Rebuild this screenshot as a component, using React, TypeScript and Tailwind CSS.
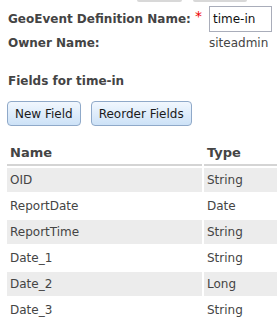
import React from "react";

const rows = [
  ["OID", "String"],
  ["ReportDate", "Date"],
  ["ReportTime", "String"],
  ["Date_1", "String"],
  ["Date_2", "Long"],
  ["Date_3", "String"],
];

export default function App() {
  return (
    <div
      className="w-[277px] h-[326px] overflow-hidden bg-white text-[#444] text-[12px]"
      style={{ fontFamily: '"DejaVu Sans", Verdana, sans-serif' }}
    >
      <div className="flex h-[2px]">
        <div className="ml-[137px] w-[45px] h-[2px] rounded-b bg-[#d8d8d8]" />
        <div className="ml-[11px] w-[54px] h-[2px] rounded-b bg-[#d8d8d8]" />
      </div>
      <div className="flex items-center mt-[4px] h-[26px]">
        <div className="pl-[8px] w-[195px] font-bold whitespace-nowrap">GeoEvent Definition Name:</div>
        <div className="w-[14px] text-[#e00] text-[14px] leading-none -mt-[6px]">*</div>
        <div className="w-[63px] h-[26px] border border-[#a9adba] flex items-center pl-[3px] text-[#111]">
          time-in
        </div>
      </div>
      <div className="flex items-center h-[20px] mt-[1px]">
        <div className="pl-[8px] w-[209px] font-bold">Owner Name:</div>
        <div>siteadmin</div>
      </div>
      <div className="pl-[8px] mt-[18px] h-[20px] flex items-center font-bold">Fields for time-in</div>
      <div className="flex gap-[10px] pl-[7px] mt-[10px]">
        <button className="h-[25px] px-[7px] rounded-[4px] border border-[#8fa9c9] bg-gradient-to-b from-[#f1f7fe] to-[#cde2f7] text-[#1a1a1a]">
          New Field
        </button>
        <button className="h-[25px] px-[7px] rounded-[4px] border border-[#8fa9c9] bg-gradient-to-b from-[#f1f7fe] to-[#cde2f7] text-[#1a1a1a]">
          Reorder Fields
        </button>
      </div>
      <table className="mt-[14px] ml-[5px] border-separate border-spacing-[2px] w-[300px] table-fixed">
        <thead>
          <tr>
            <th className="w-[195px] h-[24px] text-left font-bold pl-[3px] border-b-2 border-[#d4d4d4] text-[13px]">Name</th>
            <th className="text-left font-bold pl-[3px] border-b-2 border-[#d4d4d4] text-[13px]">Type</th>
          </tr>
        </thead>
        <tbody>
          {rows.map(([n, t], i) => (
            <tr key={n} className={i % 2 === 0 ? "bg-[#ececec]" : ""}>
              <td className="h-[24px] pl-[3px]">{n}</td>
              <td className="h-[24px] pl-[3px]">{t}</td>
            </tr>
          ))}
        </tbody>
      </table>
    </div>
  );
}
